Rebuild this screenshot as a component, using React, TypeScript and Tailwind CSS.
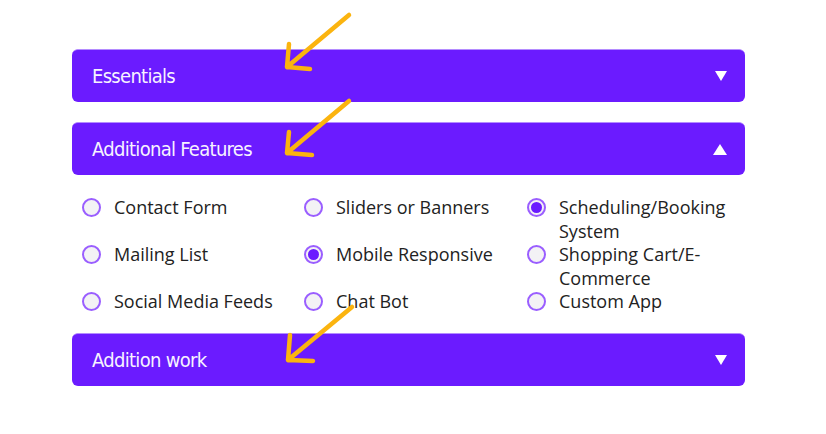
import React from "react";

const features = [
  { label: "Contact Form", checked: false },
  { label: "Sliders or Banners", checked: false },
  { label: "Scheduling/Booking System", checked: true },
  { label: "Mailing List", checked: false },
  { label: "Mobile Responsive", checked: true },
  { label: "Shopping Cart/E-Commerce", checked: false },
  { label: "Social Media Feeds", checked: false },
  { label: "Chat Bot", checked: false },
  { label: "Custom App", checked: false },
];

function Caret({ up }: { up?: boolean }) {
  return up ? (
    <svg width="14" height="11" viewBox="0 0 14 11" className="mr-[18px]">
      <polygon points="7,0 14,11 0,11" fill="white" />
    </svg>
  ) : (
    <svg width="12" height="10" viewBox="0 0 12 10" className="mr-[18px]">
      <polygon points="0,0 12,0 6,10" fill="white" />
    </svg>
  );
}

function Header({ title, open }: { title: string; open?: boolean }) {
  return (
    <div className="flex h-[53px] items-center justify-between rounded-[6px] border-t border-[#b48cff] bg-[#6b1bff] pl-5">
      <span
        className="text-[20px] font-medium tracking-[-0.7px] text-[#f7f2ff]"
        style={{ fontFamily: '"Liberation Sans Narrow", "DejaVu Sans Condensed", Lato, sans-serif' }}
      >
        {title}
      </span>
      <Caret up={open} />
    </div>
  );
}

function Radio({ checked }: { checked: boolean }) {
  return (
    <span className="mt-[2px] flex h-[19px] w-[19px] shrink-0 items-center justify-center rounded-full border-2 border-[#9a5eff] bg-[#f3f2f5]">
      {checked && <span className="h-[11px] w-[11px] rounded-full bg-[#6b1bff]" />}
    </span>
  );
}

export default function App() {
  return (
    <div className="relative h-[434px] w-[826px] overflow-hidden bg-white">
      <div className="ml-[72px] w-[673px] pt-[49px]">
        <Header title="Essentials" />
        <div className="mt-5">
          <Header title="Additional Features" open />
        </div>
        <div
          className="grid grid-cols-[222px_223px_1fr] px-[10px] pb-[19px] pt-[21px] text-[18px] leading-[23.5px] text-[#222]"
          style={{ fontFamily: '"Open Sans", sans-serif' }}
        >
          {features.map((f, i) => (
            <label key={f.label} className={`flex items-start gap-[13px] ${i < 6 ? "h-[47px]" : ""}`}>
              <Radio checked={f.checked} />
              <span>{f.label}</span>
            </label>
          ))}
        </div>
        <Header title="Addition work" />
      </div>

      <svg className="pointer-events-none absolute left-0 top-0" width="826" height="434">
        <g stroke="#fbb40f" strokeWidth="4.5" strokeLinecap="round" strokeLinejoin="round" fill="none">
          <path d="M349 15 L287 67 M289 44 L287 67 L310 69" />
          <path d="M349 101 L287 153 M289 132 L287 153 L312 155" />
          <path d="M352 307 L288 360 M290 335 L288 360 L313 361" />
        </g>
      </svg>
    </div>
  );
}
